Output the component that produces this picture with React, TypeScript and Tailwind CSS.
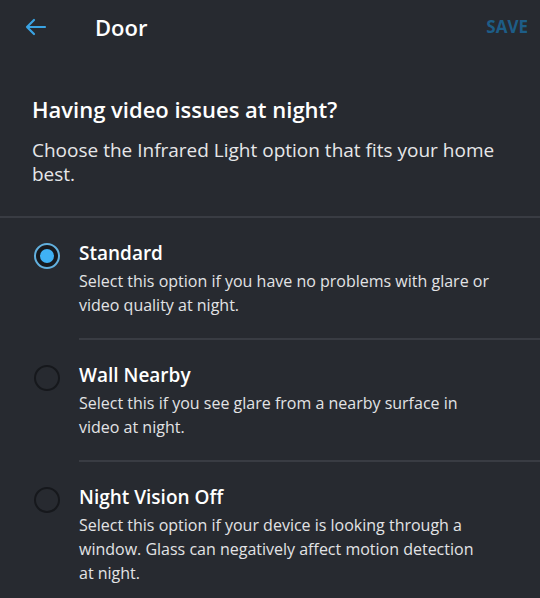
export default function App() {
  const options = [
    {
      id: "standard",
      title: "Standard",
      text: "Select this option if you have no problems with glare or video quality at night.",
      selected: true,
    },
    {
      id: "wall",
      title: "Wall Nearby",
      text: "Select this if you see glare from a nearby surface in video at night.",
      selected: false,
    },
    {
      id: "off",
      title: "Night Vision Off",
      text: "Select this option if your device is looking through a window. Glass can negatively affect motion detection at night.",
      selected: false,
    },
  ]

  return (
    <div className="w-[540px] h-[598px] overflow-hidden bg-[#272a30] text-white font-['Open_Sans',sans-serif]">
      {/* Header */}
      <div className="flex items-center h-[54px] pl-[24px] pr-[12px]">
        <svg className="w-[24px] h-[24px] text-[#3aa3e3]" viewBox="0 0 24 24" fill="none" stroke="currentColor" strokeWidth="2.2" strokeLinecap="round" strokeLinejoin="round">
          <path d="M21 12H3M10 5l-7 7 7 7" />
        </svg>
        <span className="ml-[47px] text-[22px] font-semibold">Door</span>
        <span className="ml-auto text-[17px] font-bold text-[#1d5d87]">SAVE</span>
      </div>

      {/* Intro */}
      <div className="px-[32px] pt-[40px] pb-[30px] border-b-2 border-[#393c43]">
        <h1 className="text-[22px] font-semibold leading-[30px]">Having video issues at night?</h1>
        <p className="mt-[14px] text-[19px] leading-[24px] text-[#e6e7e9]">
          Choose the Infrared Light option that fits your home best.
        </p>
      </div>

      {/* Options */}
      <div>
        {options.map((o, i) => (
          <div key={o.id} className="flex pl-[34px]">
            <div className="pt-[25px] w-[45px] shrink-0">
              {o.selected ? (
                <div className="w-[26px] h-[26px] rounded-full border-2 border-[#62b0de] bg-[#171a1f] flex items-center justify-center">
                  <div className="w-[14px] h-[14px] rounded-full bg-[#3fb1f4]" />
                </div>
              ) : (
                <div className="w-[26px] h-[26px] rounded-full border-2 border-[#16181c]" />
              )}
            </div>
            <div className={`flex-1 pt-[23px] pb-[21px] ${i < options.length - 1 ? "border-b-2 border-[#393c43]" : ""}`}>
              <div className="text-[19px] font-semibold leading-[24px]">{o.title}</div>
              <p className="mt-[4px] w-[412px] text-[16px] leading-[24px] text-[#e2e3e5]">{o.text}</p>
            </div>
          </div>
        ))}
      </div>
    </div>
  )
}
